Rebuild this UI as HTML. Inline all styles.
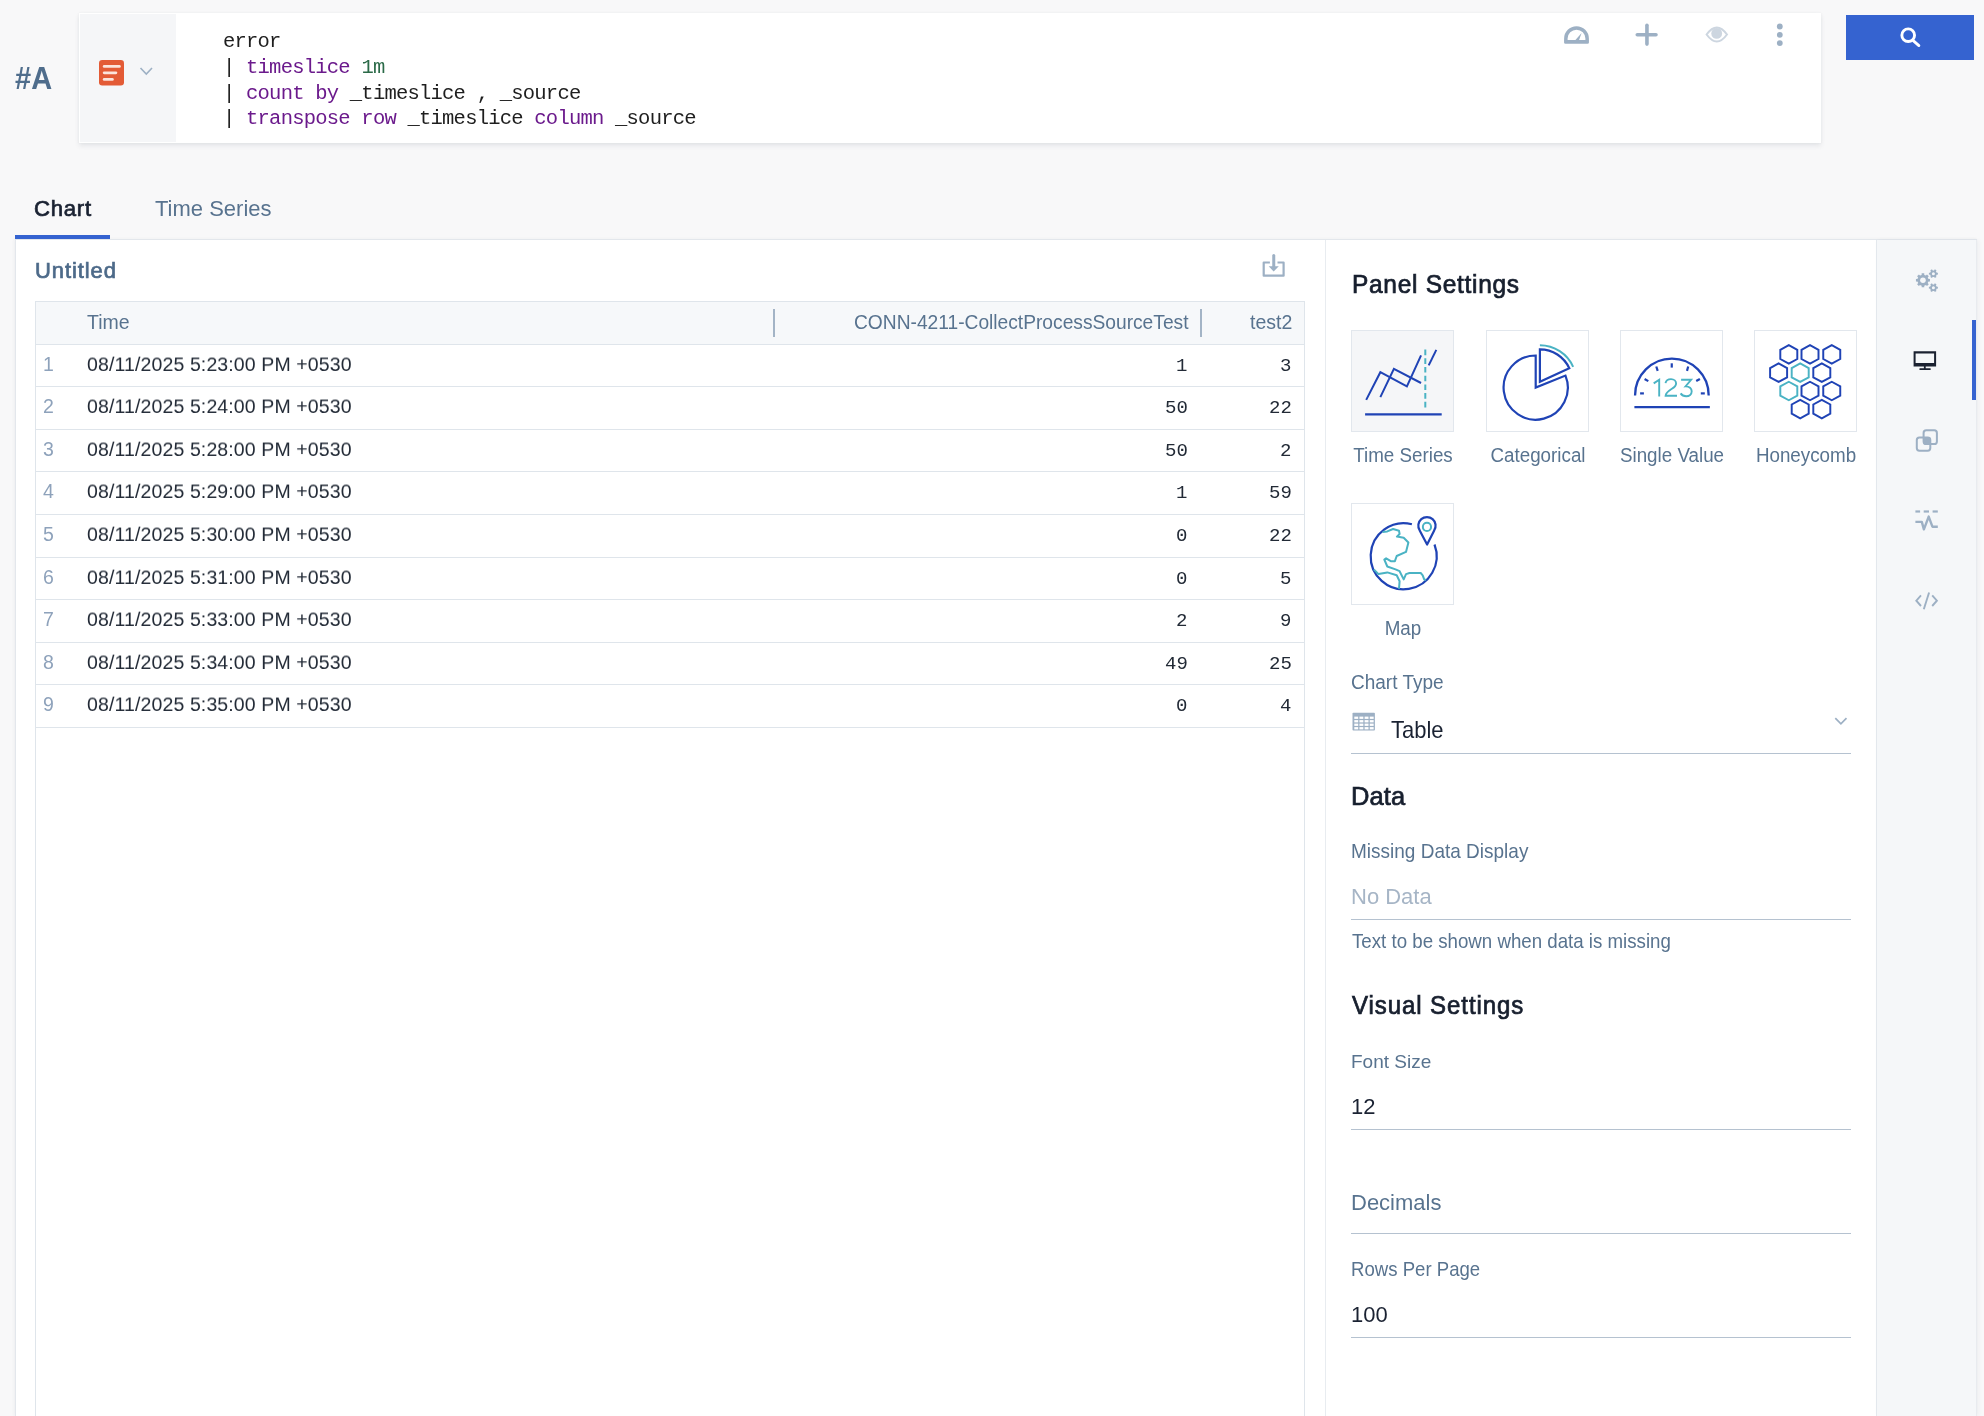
<!DOCTYPE html>
<html><head><meta charset="utf-8"><style>*{box-sizing:border-box;margin:0;padding:0}
html,body{width:1984px;height:1416px;overflow:hidden;background:#f8f8f9;font-family:"Liberation Sans",sans-serif;position:relative}
.a{position:absolute}
.t{position:absolute;white-space:pre;line-height:1;will-change:transform}
svg{position:absolute;overflow:visible}
.kw{color:#6b1a8c}.num{color:#2b6a48}
</style></head><body>
<div class="t" style="left:15.00px;top:63.00px;font-size:29px;line-height:32px;color:#4f6d8c;font-weight:bold;font-family:'Liberation Sans', sans-serif;transform:scaleY(1.1);transform-origin:0 26px;">#A</div>
<div class="a" style="left:79px;top:13px;width:1742px;height:130px;background:#fff;box-shadow:0 3px 5px rgba(40,55,80,0.09),0 0 3px rgba(40,55,80,0.05)"></div>
<div class="a" style="left:80px;top:14px;width:96px;height:128px;background:#f5f6f8"></div>
<svg style="left:99px;top:60px" width="25" height="26" viewBox="0 0 25 26">
<rect x="0" y="0" width="25" height="25.5" rx="3.2" fill="#e35b36"/>
<rect x="3.8" y="5" width="18" height="2.8" rx="1.4" fill="#fbe4dc"/>
<rect x="3.8" y="11.4" width="14.5" height="2.8" rx="1.4" fill="#fbe4dc"/>
<rect x="3.8" y="18" width="11" height="2.8" rx="1.4" fill="#fbe4dc"/>
</svg>
<svg style="left:139px;top:66px" width="15" height="11" viewBox="0 0 15 11">
<polyline points="1.5,2 7.3,8 13,2" fill="none" stroke="#9db0c4" stroke-width="1.6"/>
</svg>
<div class="t" style="left:223px;top:28.67px;font-family:'Liberation Mono', monospace;font-size:20.5px;letter-spacing:-0.772px;line-height:25.75px;color:#1e1e1e">error
| <span class="kw">timeslice</span> <span class="num">1m</span>
| <span class="kw">count by</span> _timeslice , _source
| <span class="kw">transpose row</span> _timeslice <span class="kw">column</span> _source</div>
<svg style="left:1560px;top:20px" width="34" height="30" viewBox="1560 20 34 30">
<path d="M1565.85,41.5 V38.6 A10.65,10.65 0 0 1 1587.15,38.6 V41.5" fill="none" stroke="#9db0c4" stroke-width="3.5"/>
<rect x="1564.1" y="40.1" width="24.8" height="3.6" rx="1.3" fill="#9db0c4"/>
<path d="M1575,40.4 L1581.6,33.1 L1578.9,40.4 Z" fill="#9db0c4"/>
</svg>
<svg style="left:1630px;top:20px" width="34" height="30" viewBox="1630 20 34 30">
<line x1="1646.95" y1="25.3" x2="1646.95" y2="44.1" stroke="#9db0c4" stroke-width="3.6" stroke-linecap="round"/>
<line x1="1637.3" y1="34.8" x2="1656" y2="34.8" stroke="#9db0c4" stroke-width="3.6" stroke-linecap="round"/>
</svg>
<svg style="left:1700px;top:20px" width="34" height="30" viewBox="1700 20 34 30">
<path d="M1706.6,34.5 Q1716.8,20.5 1727,34.5 Q1716.8,48.5 1706.6,34.5 Z" fill="none" stroke="#cdd6e0" stroke-width="2"/>
<circle cx="1716.7" cy="33.4" r="5.4" fill="#cdd6e0"/>
</svg>
<svg style="left:1770px;top:20px" width="20" height="30" viewBox="1770 20 20 30">
<circle cx="1779.8" cy="26.5" r="2.9" fill="#9db0c4"/><circle cx="1779.8" cy="34.8" r="2.9" fill="#9db0c4"/><circle cx="1779.8" cy="43.1" r="2.9" fill="#9db0c4"/>
</svg>
<div class="a" style="left:1846px;top:15px;width:128px;height:45px;background:#3563d0"></div>
<svg style="left:1895px;top:22px" width="30" height="30" viewBox="1895 22 30 30">
<circle cx="1908.2" cy="35.2" r="6.35" fill="none" stroke="#fff" stroke-width="2.9"/>
<line x1="1913.2" y1="40.6" x2="1918.9" y2="45.6" stroke="#fff" stroke-width="2.8" stroke-linecap="round"/>
</svg>
<div class="t" style="left:34.00px;top:196.00px;font-size:22.2px;line-height:25px;color:#1a2232;font-weight:normal;font-family:'Liberation Sans', sans-serif;-webkit-text-stroke:0.7px #1a2232;letter-spacing:0.7px;transform:scaleY(1.03);transform-origin:0 20px;">Chart</div>
<div class="t" style="left:155.00px;top:196.00px;font-size:22px;line-height:25px;color:#58738f;font-weight:normal;font-family:'Liberation Sans', sans-serif;transform:scaleY(1.03);transform-origin:0 20px;">Time Series</div>
<div class="a" style="left:15px;top:239px;width:1962px;height:1177px;background:#fff;box-shadow:-1px 0 3px rgba(40,55,80,0.05)"></div>
<div class="a" style="left:15px;top:239px;width:1962px;height:1px;background:#e3e7ec"></div>
<div class="a" style="left:15px;top:240px;width:1px;height:1176px;background:#e3e7ec"></div>
<div class="a" style="left:1325px;top:240px;width:1px;height:1176px;background:#e8ecf0"></div>
<div class="a" style="left:1876px;top:240px;width:101px;height:1176px;background:#f5f7f9;border-left:1px solid #e3e8ed;border-right:1px solid #e8ebef;box-shadow:2px 0 4px rgba(30,45,70,0.04)"></div>
<div class="a" style="left:15px;top:235px;width:95px;height:4px;background:#3563d0"></div>
<div class="a" style="left:1972px;top:320px;width:4px;height:80px;background:#3563d0"></div>
<div class="t" style="left:35.30px;top:258.00px;font-size:22px;line-height:25px;color:#4d6a89;font-weight:normal;font-family:'Liberation Sans', sans-serif;-webkit-text-stroke:0.7px #4d6a89;letter-spacing:0.9px;transform:scaleY(1.03);transform-origin:0 20px;">Untitled</div>
<svg style="left:1258px;top:250px" width="32" height="32" viewBox="1258 250 32 32">
<path d="M1269.9,262.5 L1263.7,262.5 L1263.7,275.7 L1283.6,275.7 L1283.6,262.5 L1277.5,262.5" fill="none" stroke="#9db0c4" stroke-width="2.2" stroke-linejoin="round"/>
<line x1="1273.75" y1="255.6" x2="1273.75" y2="267" stroke="#9db0c4" stroke-width="3" stroke-linecap="round"/>
<path d="M1268.7,266.3 L1278.8,266.3 L1273.7,271.6 Z" fill="#9db0c4"/>
</svg>
<div class="a" style="left:35px;top:301px;width:1270px;height:1115px;border-left:1px solid #dfe5eb;border-right:1px solid #dfe5eb;border-top:1px solid #dfe5eb"></div>
<div class="a" style="left:36px;top:302px;width:1268px;height:42px;background:#f6f8fa"></div>
<div class="a" style="left:36px;top:344px;width:1268px;height:1px;background:#dfe5eb"></div>
<div class="a" style="left:36px;top:386px;width:1268px;height:1px;background:#dfe5eb"></div>
<div class="a" style="left:36px;top:429px;width:1268px;height:1px;background:#dfe5eb"></div>
<div class="a" style="left:36px;top:471px;width:1268px;height:1px;background:#dfe5eb"></div>
<div class="a" style="left:36px;top:514px;width:1268px;height:1px;background:#dfe5eb"></div>
<div class="a" style="left:36px;top:557px;width:1268px;height:1px;background:#dfe5eb"></div>
<div class="a" style="left:36px;top:599px;width:1268px;height:1px;background:#dfe5eb"></div>
<div class="a" style="left:36px;top:642px;width:1268px;height:1px;background:#dfe5eb"></div>
<div class="a" style="left:36px;top:684px;width:1268px;height:1px;background:#dfe5eb"></div>
<div class="a" style="left:36px;top:727px;width:1268px;height:1px;background:#dfe5eb"></div>
<div class="a" style="left:773px;top:309px;width:2px;height:28px;background:#a3b4c6"></div>
<div class="a" style="left:1200px;top:309px;width:2px;height:28px;background:#a3b4c6"></div>
<div class="t" style="left:87.30px;top:311.00px;font-size:19.5px;line-height:22px;color:#58738f;font-weight:normal;font-family:'Liberation Sans', sans-serif;transform:scaleY(1.03);transform-origin:0 18px;">Time</div>
<div class="t" style="right:796.00px;top:312.00px;font-size:19.2px;line-height:21px;color:#58738f;font-weight:normal;font-family:'Liberation Sans', sans-serif;transform:scaleY(1.045);transform-origin:0 17px;">CONN-4211-CollectProcessSourceTest</div>
<div class="t" style="right:692.00px;top:311.00px;font-size:19.5px;line-height:22px;color:#58738f;font-weight:normal;font-family:'Liberation Sans', sans-serif;transform:scaleY(1.045);transform-origin:0 18px;">test2</div>
<div class="t" style="left:43.00px;top:353.00px;font-size:19.5px;line-height:22px;color:#8ea2bb;font-weight:normal;font-family:'Liberation Sans', sans-serif;">1</div>
<div class="t" style="left:87.30px;top:353.00px;font-size:19.5px;line-height:22px;color:#222a36;font-weight:normal;font-family:'Liberation Sans', sans-serif;letter-spacing:0.12px;transform:scaleY(0.96);transform-origin:0 18px;">08/11/2025 5:23:00 PM +0530</div>
<div class="t" style="right:796.50px;top:355.00px;font-size:19px;line-height:22px;color:#222a36;font-weight:normal;font-family:'Liberation Mono', monospace;">1</div>
<div class="t" style="right:692.50px;top:355.00px;font-size:19px;line-height:22px;color:#222a36;font-weight:normal;font-family:'Liberation Mono', monospace;">3</div>
<div class="t" style="left:43.00px;top:395.00px;font-size:19.5px;line-height:22px;color:#8ea2bb;font-weight:normal;font-family:'Liberation Sans', sans-serif;">2</div>
<div class="t" style="left:87.30px;top:395.00px;font-size:19.5px;line-height:22px;color:#222a36;font-weight:normal;font-family:'Liberation Sans', sans-serif;letter-spacing:0.12px;transform:scaleY(0.96);transform-origin:0 18px;">08/11/2025 5:24:00 PM +0530</div>
<div class="t" style="right:796.50px;top:397.00px;font-size:19px;line-height:22px;color:#222a36;font-weight:normal;font-family:'Liberation Mono', monospace;">50</div>
<div class="t" style="right:692.50px;top:397.00px;font-size:19px;line-height:22px;color:#222a36;font-weight:normal;font-family:'Liberation Mono', monospace;">22</div>
<div class="t" style="left:43.00px;top:438.00px;font-size:19.5px;line-height:22px;color:#8ea2bb;font-weight:normal;font-family:'Liberation Sans', sans-serif;">3</div>
<div class="t" style="left:87.30px;top:438.00px;font-size:19.5px;line-height:22px;color:#222a36;font-weight:normal;font-family:'Liberation Sans', sans-serif;letter-spacing:0.12px;transform:scaleY(0.96);transform-origin:0 18px;">08/11/2025 5:28:00 PM +0530</div>
<div class="t" style="right:796.50px;top:440.00px;font-size:19px;line-height:22px;color:#222a36;font-weight:normal;font-family:'Liberation Mono', monospace;">50</div>
<div class="t" style="right:692.50px;top:440.00px;font-size:19px;line-height:22px;color:#222a36;font-weight:normal;font-family:'Liberation Mono', monospace;">2</div>
<div class="t" style="left:43.00px;top:480.00px;font-size:19.5px;line-height:22px;color:#8ea2bb;font-weight:normal;font-family:'Liberation Sans', sans-serif;">4</div>
<div class="t" style="left:87.30px;top:480.00px;font-size:19.5px;line-height:22px;color:#222a36;font-weight:normal;font-family:'Liberation Sans', sans-serif;letter-spacing:0.12px;transform:scaleY(0.96);transform-origin:0 18px;">08/11/2025 5:29:00 PM +0530</div>
<div class="t" style="right:796.50px;top:482.00px;font-size:19px;line-height:22px;color:#222a36;font-weight:normal;font-family:'Liberation Mono', monospace;">1</div>
<div class="t" style="right:692.50px;top:482.00px;font-size:19px;line-height:22px;color:#222a36;font-weight:normal;font-family:'Liberation Mono', monospace;">59</div>
<div class="t" style="left:43.00px;top:523.00px;font-size:19.5px;line-height:22px;color:#8ea2bb;font-weight:normal;font-family:'Liberation Sans', sans-serif;">5</div>
<div class="t" style="left:87.30px;top:523.00px;font-size:19.5px;line-height:22px;color:#222a36;font-weight:normal;font-family:'Liberation Sans', sans-serif;letter-spacing:0.12px;transform:scaleY(0.96);transform-origin:0 18px;">08/11/2025 5:30:00 PM +0530</div>
<div class="t" style="right:796.50px;top:525.00px;font-size:19px;line-height:22px;color:#222a36;font-weight:normal;font-family:'Liberation Mono', monospace;">0</div>
<div class="t" style="right:692.50px;top:525.00px;font-size:19px;line-height:22px;color:#222a36;font-weight:normal;font-family:'Liberation Mono', monospace;">22</div>
<div class="t" style="left:43.00px;top:566.00px;font-size:19.5px;line-height:22px;color:#8ea2bb;font-weight:normal;font-family:'Liberation Sans', sans-serif;">6</div>
<div class="t" style="left:87.30px;top:566.00px;font-size:19.5px;line-height:22px;color:#222a36;font-weight:normal;font-family:'Liberation Sans', sans-serif;letter-spacing:0.12px;transform:scaleY(0.96);transform-origin:0 18px;">08/11/2025 5:31:00 PM +0530</div>
<div class="t" style="right:796.50px;top:568.00px;font-size:19px;line-height:22px;color:#222a36;font-weight:normal;font-family:'Liberation Mono', monospace;">0</div>
<div class="t" style="right:692.50px;top:568.00px;font-size:19px;line-height:22px;color:#222a36;font-weight:normal;font-family:'Liberation Mono', monospace;">5</div>
<div class="t" style="left:43.00px;top:608.00px;font-size:19.5px;line-height:22px;color:#8ea2bb;font-weight:normal;font-family:'Liberation Sans', sans-serif;">7</div>
<div class="t" style="left:87.30px;top:608.00px;font-size:19.5px;line-height:22px;color:#222a36;font-weight:normal;font-family:'Liberation Sans', sans-serif;letter-spacing:0.12px;transform:scaleY(0.96);transform-origin:0 18px;">08/11/2025 5:33:00 PM +0530</div>
<div class="t" style="right:796.50px;top:610.00px;font-size:19px;line-height:22px;color:#222a36;font-weight:normal;font-family:'Liberation Mono', monospace;">2</div>
<div class="t" style="right:692.50px;top:610.00px;font-size:19px;line-height:22px;color:#222a36;font-weight:normal;font-family:'Liberation Mono', monospace;">9</div>
<div class="t" style="left:43.00px;top:651.00px;font-size:19.5px;line-height:22px;color:#8ea2bb;font-weight:normal;font-family:'Liberation Sans', sans-serif;">8</div>
<div class="t" style="left:87.30px;top:651.00px;font-size:19.5px;line-height:22px;color:#222a36;font-weight:normal;font-family:'Liberation Sans', sans-serif;letter-spacing:0.12px;transform:scaleY(0.96);transform-origin:0 18px;">08/11/2025 5:34:00 PM +0530</div>
<div class="t" style="right:796.50px;top:653.00px;font-size:19px;line-height:22px;color:#222a36;font-weight:normal;font-family:'Liberation Mono', monospace;">49</div>
<div class="t" style="right:692.50px;top:653.00px;font-size:19px;line-height:22px;color:#222a36;font-weight:normal;font-family:'Liberation Mono', monospace;">25</div>
<div class="t" style="left:43.00px;top:693.00px;font-size:19.5px;line-height:22px;color:#8ea2bb;font-weight:normal;font-family:'Liberation Sans', sans-serif;">9</div>
<div class="t" style="left:87.30px;top:693.00px;font-size:19.5px;line-height:22px;color:#222a36;font-weight:normal;font-family:'Liberation Sans', sans-serif;letter-spacing:0.12px;transform:scaleY(0.96);transform-origin:0 18px;">08/11/2025 5:35:00 PM +0530</div>
<div class="t" style="right:796.50px;top:695.00px;font-size:19px;line-height:22px;color:#222a36;font-weight:normal;font-family:'Liberation Mono', monospace;">0</div>
<div class="t" style="right:692.50px;top:695.00px;font-size:19px;line-height:22px;color:#222a36;font-weight:normal;font-family:'Liberation Mono', monospace;">4</div>
<div class="t" style="left:1352.00px;top:271.00px;font-size:24.5px;line-height:27px;color:#171f2e;font-weight:normal;font-family:'Liberation Sans', sans-serif;-webkit-text-stroke:0.7px #171f2e;letter-spacing:0.7px;transform:scaleY(1.07);transform-origin:0 22px;">Panel Settings</div>
<div class="a" style="left:1351px;top:330px;width:103px;height:102px;background:#f5f6f8;border:1px solid #e2e7ed"></div>
<div class="t" style="left:1202.50px;width:400px;text-align:center;top:445.00px;font-size:18.8px;line-height:21px;color:#58738f;font-weight:normal;font-family:'Liberation Sans', sans-serif;transform:scaleY(1.06);transform-origin:0 17px;">Time Series</div>
<div class="a" style="left:1486px;top:330px;width:103px;height:102px;background:#fff;border:1px solid #e2e7ed"></div>
<div class="t" style="left:1337.50px;width:400px;text-align:center;top:445.00px;font-size:18.8px;line-height:21px;color:#58738f;font-weight:normal;font-family:'Liberation Sans', sans-serif;transform:scaleY(1.06);transform-origin:0 17px;">Categorical</div>
<div class="a" style="left:1620px;top:330px;width:103px;height:102px;background:#fff;border:1px solid #e2e7ed"></div>
<div class="t" style="left:1471.50px;width:400px;text-align:center;top:445.00px;font-size:18.8px;line-height:21px;color:#58738f;font-weight:normal;font-family:'Liberation Sans', sans-serif;transform:scaleY(1.06);transform-origin:0 17px;">Single Value</div>
<div class="a" style="left:1754px;top:330px;width:103px;height:102px;background:#fff;border:1px solid #e2e7ed"></div>
<div class="t" style="left:1605.50px;width:400px;text-align:center;top:445.00px;font-size:18.8px;line-height:21px;color:#58738f;font-weight:normal;font-family:'Liberation Sans', sans-serif;transform:scaleY(1.06);transform-origin:0 17px;">Honeycomb</div>
<div class="a" style="left:1351px;top:503px;width:103px;height:102px;background:#fff;border:1px solid #e2e7ed"></div>
<div class="t" style="left:1202.50px;width:400px;text-align:center;top:618.00px;font-size:18.8px;line-height:21px;color:#58738f;font-weight:normal;font-family:'Liberation Sans', sans-serif;transform:scaleY(1.06);transform-origin:0 17px;">Map</div>
<svg style="left:1351px;top:330px" width="103" height="102" viewBox="-0.2 -0.2 103 102">
<line x1="13.9" y1="84.1" x2="90.5" y2="84.1" stroke="#1f43b5" stroke-width="2.3"/>
<polyline points="15,69.7 29.15,42 55.7,56.2 69.85,25.1" fill="none" stroke="#1f43b5" stroke-width="2"/>
<polyline points="29.15,66.9 42.7,38.6 69.85,52.8" fill="none" stroke="#1f43b5" stroke-width="2"/>
<line x1="77.5" y1="35.2" x2="85.1" y2="19.7" stroke="#1f43b5" stroke-width="2"/>
<line x1="74.1" y1="19.4" x2="74.1" y2="77.4" stroke="#4ab3c4" stroke-width="2" stroke-dasharray="5.6,3.1"/>
</svg>
<svg style="left:1486px;top:330px" width="103" height="102" viewBox="-0.4 -0.2 103 102">
<path d="M49.3,25.30 A32.1,32.1 0 1 0 79.06,45.38 L49.3,57.4 Z" fill="none" stroke="#1f43b5" stroke-width="2.2"/>
<path d="M53.5,19.20 A32.3,32.3 0 0 1 82.89,38.11 L53.5,51.5 Z" fill="none" stroke="#1f43b5" stroke-width="2.2"/>
<path d="M53.50,15.10 A36.4,36.4 0 0 1 86.75,36.69" fill="none" stroke="#4ab3c4" stroke-width="2"/>
</svg>
<svg style="left:1620px;top:330px" width="103" height="102" viewBox="-0.5 -0.5 103 102">
<path d="M14.55,64.9 A36.75,36.75 0 0 1 88.2,64.9" fill="none" stroke="#1f43b5" stroke-width="2.3"/>
<line x1="13.9" y1="76.6" x2="89.35" y2="76.6" stroke="#1f43b5" stroke-width="2.3"/>
<g stroke="#1f43b5" stroke-width="2.2">
<line x1="19.6" y1="62.9" x2="23.4" y2="62.9"/><line x1="80.3" y1="62.9" x2="84.3" y2="62.9"/>
<line x1="24.1" y1="48.5" x2="27.8" y2="50.6"/><line x1="79.4" y1="48.5" x2="75.7" y2="50.5"/>
<line x1="35.8" y1="36" x2="37.2" y2="40.3"/><line x1="67.7" y1="36" x2="66.5" y2="40.4"/>
<line x1="51.26" y1="32.8" x2="51.26" y2="37.1"/>
</g>
<g fill="none" stroke="#4ab3c4" stroke-width="1.9" stroke-linejoin="miter"><path d="M33.2,52.9 L38.7,49.3 V66.1"/><path d="M45,52.6 C45.5,49.9 47.7,48.6 50.5,48.6 C53.6,48.6 55.6,50.6 55.6,53 C55.6,55.4 54,56.7 51.4,58.3 C47.6,60.6 45.3,62.4 45.1,65.3 H56.5"/><path d="M60.6,49.3 H70.6 L65,55.9 C68.9,55.8 71.2,57.9 71.2,60.8 C71.2,63.9 68.8,65.7 65.7,65.7 C63.3,65.7 61.3,64.7 60.1,62.9"/></g>
</svg>
<svg style="left:1754px;top:330px" width="103" height="102" viewBox="-0.4 -0.5 103 102"><polygon points="34.40,14.65 42.90,19.27 42.90,28.52 34.40,33.15 25.90,28.52 25.90,19.27" fill="none" stroke="#1f43b5" stroke-width="1.95"/><polygon points="55.60,14.65 64.10,19.27 64.10,28.52 55.60,33.15 47.10,28.52 47.10,19.27" fill="none" stroke="#1f43b5" stroke-width="1.95"/><polygon points="77.35,14.65 85.85,19.27 85.85,28.52 77.35,33.15 68.85,28.52 68.85,19.27" fill="none" stroke="#1f43b5" stroke-width="1.95"/><polygon points="24.20,32.95 32.70,37.58 32.70,46.83 24.20,51.45 15.70,46.83 15.70,37.58" fill="none" stroke="#1f43b5" stroke-width="1.95"/><polygon points="45.80,32.95 54.30,37.58 54.30,46.83 45.80,51.45 37.30,46.83 37.30,37.58" fill="none" stroke="#4ab3c4" stroke-width="1.95"/><polygon points="67.40,32.95 75.90,37.58 75.90,46.83 67.40,51.45 58.90,46.83 58.90,37.58" fill="none" stroke="#1f43b5" stroke-width="1.95"/><polygon points="34.40,51.25 42.90,55.88 42.90,65.12 34.40,69.75 25.90,65.12 25.90,55.88" fill="none" stroke="#4ab3c4" stroke-width="1.95"/><polygon points="55.60,51.25 64.10,55.88 64.10,65.12 55.60,69.75 47.10,65.12 47.10,55.88" fill="none" stroke="#1f43b5" stroke-width="1.95"/><polygon points="77.35,51.25 85.85,55.88 85.85,65.12 77.35,69.75 68.85,65.12 68.85,55.88" fill="none" stroke="#1f43b5" stroke-width="1.95"/><polygon points="45.80,69.35 54.30,73.97 54.30,83.22 45.80,87.85 37.30,83.22 37.30,73.97" fill="none" stroke="#1f43b5" stroke-width="1.95"/><polygon points="67.40,69.35 75.90,73.97 75.90,83.22 67.40,87.85 58.90,83.22 58.90,73.97" fill="none" stroke="#1f43b5" stroke-width="1.95"/></svg>
<svg style="left:1351px;top:503px" width="103" height="102" viewBox="-0.3 -0.2 103 102">
<path d="M60.6,21.1 A33,33 0 1 0 83.2,41.3" fill="none" stroke="#1f43b5" stroke-width="2.2"/>
<path d="M75.8,41.3 L68.4,27.2 A8.65,8.65 0 1 1 82.9,27.2 Z" fill="none" stroke="#1f43b5" stroke-width="2.2" stroke-linejoin="round"/>
<circle cx="75.65" cy="23.75" r="4.1" fill="none" stroke="#4ab3c4" stroke-width="2"/>
<polyline points="31.3,28.7 36,28.2 41.8,25.8 47.7,27.6 48.3,30.8 45.6,33.4 52.4,34.6 57.1,39.3 55.9,44 54.7,48.7 45.4,52.8 43.6,58 39.5,58 34.8,55.1 33,56.3 36,63.3 44.2,66.2 48.3,68 52.4,76.2 54.7,70.9 58.2,69.8 69.4,69.8 71.4,72.1 72.9,76.2 74.7,76.8" fill="none" stroke="#4ab3c4" stroke-width="2" stroke-linejoin="round"/>
<polyline points="22.5,66.2 27.2,70.9 36,69.2 45.4,72.1 48.3,78 47.7,85.6" fill="none" stroke="#4ab3c4" stroke-width="2" stroke-linejoin="round"/>
</svg>
<div class="t" style="left:1351.00px;top:672.00px;font-size:19px;line-height:21px;color:#58738f;font-weight:normal;font-family:'Liberation Sans', sans-serif;transform:scaleY(1.05);transform-origin:0 17px;">Chart Type</div>
<svg style="left:1352px;top:712px" width="24" height="20" viewBox="0 0 24 20">
<rect x="0.5" y="0.8" width="22.4" height="17.8" rx="0.8" fill="#9db0c4"/>
<g fill="#fff"><rect x="2.30" y="4.60" width="3.9" height="2.3"/><rect x="2.30" y="8.10" width="3.9" height="2.3"/><rect x="2.30" y="11.60" width="3.9" height="2.3"/><rect x="2.30" y="15.10" width="3.9" height="2.3"/><rect x="7.45" y="4.60" width="3.9" height="2.3"/><rect x="7.45" y="8.10" width="3.9" height="2.3"/><rect x="7.45" y="11.60" width="3.9" height="2.3"/><rect x="7.45" y="15.10" width="3.9" height="2.3"/><rect x="12.60" y="4.60" width="3.9" height="2.3"/><rect x="12.60" y="8.10" width="3.9" height="2.3"/><rect x="12.60" y="11.60" width="3.9" height="2.3"/><rect x="12.60" y="15.10" width="3.9" height="2.3"/><rect x="17.75" y="4.60" width="3.9" height="2.3"/><rect x="17.75" y="8.10" width="3.9" height="2.3"/><rect x="17.75" y="11.60" width="3.9" height="2.3"/><rect x="17.75" y="15.10" width="3.9" height="2.3"/></g>
</svg>
<div class="t" style="left:1390.50px;top:718.00px;font-size:22px;line-height:25px;color:#1a2232;font-weight:normal;font-family:'Liberation Sans', sans-serif;transform:scaleY(1.045);transform-origin:0 20px;">Table</div>
<svg style="left:1832px;top:715px" width="18" height="14" viewBox="0 0 18 14">
<polyline points="3.3,3.2 8.9,8.9 14.5,3.2" fill="none" stroke="#9db0c4" stroke-width="1.7"/>
</svg>
<div class="a" style="left:1351px;top:753px;width:500px;height:1px;background:#b5c2d0"></div>
<div class="t" style="left:1351.00px;top:782.00px;font-size:25.5px;line-height:28px;color:#171f2e;font-weight:normal;font-family:'Liberation Sans', sans-serif;-webkit-text-stroke:0.7px #171f2e;letter-spacing:0.1px;transform:scaleY(1.03);transform-origin:0 23px;">Data</div>
<div class="t" style="left:1351.00px;top:841.00px;font-size:19px;line-height:21px;color:#58738f;font-weight:normal;font-family:'Liberation Sans', sans-serif;transform:scaleY(1.04);transform-origin:0 17px;">Missing Data Display</div>
<div class="t" style="left:1351.00px;top:884.00px;font-size:22px;line-height:25px;color:#a6b5c6;font-weight:normal;font-family:'Liberation Sans', sans-serif;transform:scaleY(1.04);transform-origin:0 20px;">No Data</div>
<div class="a" style="left:1351px;top:919px;width:500px;height:1px;background:#b5c2d0"></div>
<div class="t" style="left:1352.00px;top:931.00px;font-size:18.7px;line-height:21px;color:#58738f;font-weight:normal;font-family:'Liberation Sans', sans-serif;transform:scaleY(1.06);transform-origin:0 17px;">Text to be shown when data is missing</div>
<div class="t" style="left:1352.00px;top:992.00px;font-size:24px;line-height:27px;color:#171f2e;font-weight:normal;font-family:'Liberation Sans', sans-serif;-webkit-text-stroke:0.7px #171f2e;letter-spacing:0.93px;transform:scaleY(1.05);transform-origin:0 22px;">Visual Settings</div>
<div class="t" style="left:1351.00px;top:1051.00px;font-size:19px;line-height:21px;color:#58738f;font-weight:normal;font-family:'Liberation Sans', sans-serif;">Font Size</div>
<div class="t" style="left:1351.00px;top:1094.00px;font-size:22px;line-height:25px;color:#1a2232;font-weight:normal;font-family:'Liberation Sans', sans-serif;transform:scaleY(1.02);transform-origin:0 20px;">12</div>
<div class="a" style="left:1351px;top:1129px;width:500px;height:1px;background:#b5c2d0"></div>
<div class="t" style="left:1351.00px;top:1190.00px;font-size:22px;line-height:25px;color:#58738f;font-weight:normal;font-family:'Liberation Sans', sans-serif;transform:scaleY(1.03);transform-origin:0 20px;">Decimals</div>
<div class="a" style="left:1351px;top:1233px;width:500px;height:1px;background:#b5c2d0"></div>
<div class="t" style="left:1351.00px;top:1259.00px;font-size:18.6px;line-height:21px;color:#58738f;font-weight:normal;font-family:'Liberation Sans', sans-serif;transform:scaleY(1.05);transform-origin:0 17px;">Rows Per Page</div>
<div class="t" style="left:1351.00px;top:1302.00px;font-size:22px;line-height:25px;color:#1a2232;font-weight:normal;font-family:'Liberation Sans', sans-serif;">100</div>
<div class="a" style="left:1351px;top:1337px;width:500px;height:1px;background:#b5c2d0"></div>
<svg style="left:1900px;top:260px" width="50" height="40" viewBox="1900 260 50 40"><circle cx="1922.95" cy="280.25" r="5.6" fill="#9db0c4"/><rect x="1921.65" y="273.25" width="2.6" height="7.00" fill="#9db0c4" transform="rotate(0.0 1922.95 280.25)"/><rect x="1921.65" y="273.25" width="2.6" height="7.00" fill="#9db0c4" transform="rotate(45.0 1922.95 280.25)"/><rect x="1921.65" y="273.25" width="2.6" height="7.00" fill="#9db0c4" transform="rotate(90.0 1922.95 280.25)"/><rect x="1921.65" y="273.25" width="2.6" height="7.00" fill="#9db0c4" transform="rotate(135.0 1922.95 280.25)"/><rect x="1921.65" y="273.25" width="2.6" height="7.00" fill="#9db0c4" transform="rotate(180.0 1922.95 280.25)"/><rect x="1921.65" y="273.25" width="2.6" height="7.00" fill="#9db0c4" transform="rotate(225.0 1922.95 280.25)"/><rect x="1921.65" y="273.25" width="2.6" height="7.00" fill="#9db0c4" transform="rotate(270.0 1922.95 280.25)"/><rect x="1921.65" y="273.25" width="2.6" height="7.00" fill="#9db0c4" transform="rotate(315.0 1922.95 280.25)"/><circle cx="1922.95" cy="280.25" r="2.8" fill="#f5f7f9"/><circle cx="1933.4" cy="273.7" r="3.3" fill="#9db0c4"/><rect x="1932.45" y="269.20" width="1.9" height="4.50" fill="#9db0c4" transform="rotate(90.0 1933.4 273.7)"/><rect x="1932.45" y="269.20" width="1.9" height="4.50" fill="#9db0c4" transform="rotate(150.0 1933.4 273.7)"/><rect x="1932.45" y="269.20" width="1.9" height="4.50" fill="#9db0c4" transform="rotate(210.0 1933.4 273.7)"/><rect x="1932.45" y="269.20" width="1.9" height="4.50" fill="#9db0c4" transform="rotate(270.0 1933.4 273.7)"/><rect x="1932.45" y="269.20" width="1.9" height="4.50" fill="#9db0c4" transform="rotate(330.0 1933.4 273.7)"/><rect x="1932.45" y="269.20" width="1.9" height="4.50" fill="#9db0c4" transform="rotate(390.0 1933.4 273.7)"/><circle cx="1933.4" cy="273.7" r="1.5" fill="#f5f7f9"/><circle cx="1933.4" cy="287.7" r="3.3" fill="#9db0c4"/><rect x="1932.45" y="283.20" width="1.9" height="4.50" fill="#9db0c4" transform="rotate(90.0 1933.4 287.7)"/><rect x="1932.45" y="283.20" width="1.9" height="4.50" fill="#9db0c4" transform="rotate(150.0 1933.4 287.7)"/><rect x="1932.45" y="283.20" width="1.9" height="4.50" fill="#9db0c4" transform="rotate(210.0 1933.4 287.7)"/><rect x="1932.45" y="283.20" width="1.9" height="4.50" fill="#9db0c4" transform="rotate(270.0 1933.4 287.7)"/><rect x="1932.45" y="283.20" width="1.9" height="4.50" fill="#9db0c4" transform="rotate(330.0 1933.4 287.7)"/><rect x="1932.45" y="283.20" width="1.9" height="4.50" fill="#9db0c4" transform="rotate(390.0 1933.4 287.7)"/><circle cx="1933.4" cy="287.7" r="1.5" fill="#f5f7f9"/></svg>
<svg style="left:1905px;top:345px" width="40" height="30" viewBox="1905 345 40 30">
<path d="M1913.6,351.2 H1936.1 V366.6 H1913.6 Z M1915.6,353.4 V362.9 H1934.1 V353.4 Z" fill="#1b2231" fill-rule="evenodd"/>
<rect x="1923.9" y="366" width="1.8" height="3" fill="#1b2231"/>
<rect x="1919.3" y="368.3" width="11.5" height="1.7" rx="0.8" fill="#1b2231"/>
</svg>
<svg style="left:1905px;top:420px" width="40" height="40" viewBox="1905 420 40 40">
<rect x="1923.6" y="430.3" width="13.3" height="13.8" rx="2.6" fill="none" stroke="#9db0c4" stroke-width="2"/>
<rect x="1916.8" y="437.4" width="13.5" height="13.3" rx="2.6" fill="none" stroke="#9db0c4" stroke-width="2"/>
<rect x="1923.6" y="437.4" width="6.7" height="6.7" fill="#9db0c4"/>
</svg>
<svg style="left:1905px;top:500px" width="40" height="40" viewBox="1905 500 40 40">
<g stroke="#9db0c4" stroke-width="2.2">
<line x1="1915.4" y1="511.5" x2="1920.1" y2="511.5"/><line x1="1923.7" y1="511.5" x2="1929" y2="511.5"/><line x1="1932.6" y1="511.5" x2="1937.8" y2="511.5"/>
</g>
<polyline points="1915.4,521.9 1921.8,521.9 1923.9,529.3 1928.7,516.6 1932.4,526.7 1937.8,526.7" fill="none" stroke="#9db0c4" stroke-width="2.4" stroke-linejoin="round"/>
</svg>
<svg style="left:1905px;top:585px" width="40" height="30" viewBox="1905 585 40 30">
<polyline points="1921,595.3 1916.3,600.7 1921,606" fill="none" stroke="#9db0c4" stroke-width="1.9"/>
<polyline points="1932.2,595.3 1936.9,600.7 1932.2,606" fill="none" stroke="#9db0c4" stroke-width="1.9"/>
<line x1="1929.1" y1="592.5" x2="1923.8" y2="609.3" stroke="#9db0c4" stroke-width="1.9"/>
</svg>
</body></html>
